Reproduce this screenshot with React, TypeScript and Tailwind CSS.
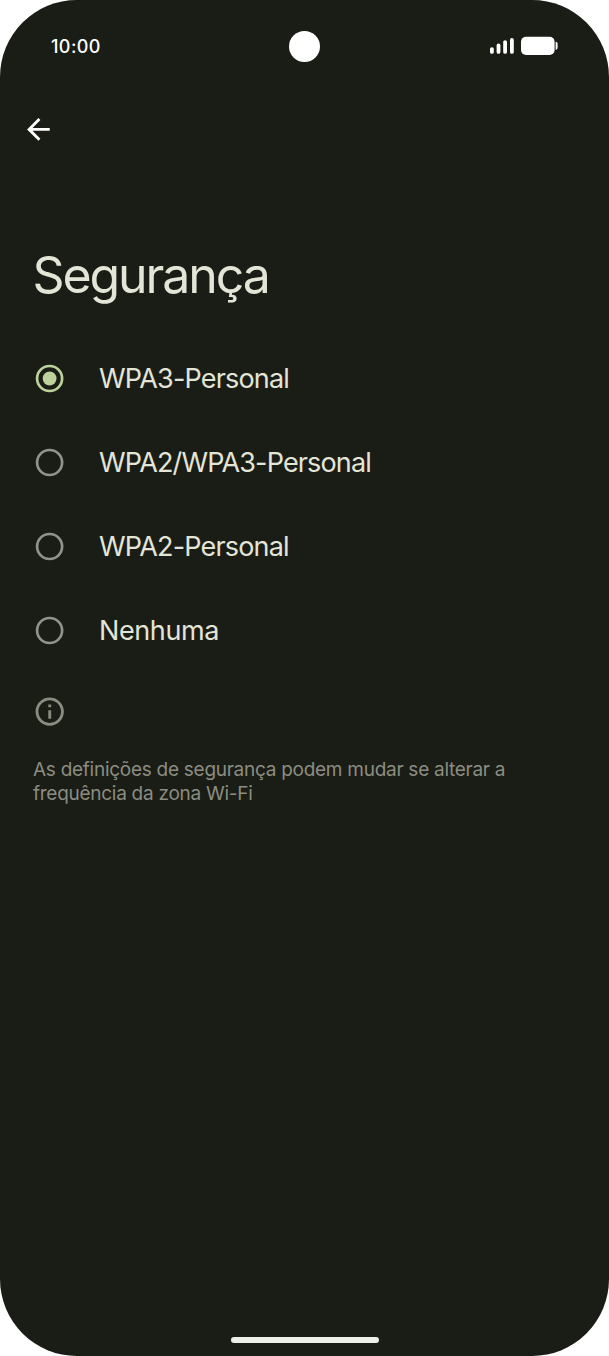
import { useState } from "react";
import clsx from "clsx";

type SecurityOption = {
  id: string;
  label: string;
  tracking: string;
};

const securityOptions: SecurityOption[] = [
  { id: "wpa3", label: "WPA3-Personal", tracking: "tracking-[-0.82px]" },
  { id: "wpa2-wpa3", label: "WPA2/WPA3-Personal", tracking: "tracking-[-0.86px]" },
  { id: "wpa2", label: "WPA2-Personal", tracking: "tracking-[-0.82px]" },
  { id: "none", label: "Nenhuma", tracking: "tracking-[-0.4px]" },
];

function StatusBar() {
  return (
    <header className="grid h-[92px] grid-cols-3 items-center pr-[51px] pl-[51px] text-white">
      <span className="pt-px text-[18px] leading-6 font-medium tracking-[0.4px]">
        10:00
      </span>
      <div className="ml-[68.5px] size-[31px] rounded-full bg-white" />
      <div className="flex items-center justify-end">
        <svg width="69" height="20" viewBox="0 0 69 20" fill="currentColor">
          <rect x="1" y="11.2" width="3.8" height="6.6" rx="1.9" />
          <rect x="7.6" y="7.6" width="3.8" height="10.2" rx="1.9" />
          <rect x="14.2" y="4.2" width="3.8" height="13.6" rx="1.9" />
          <rect x="21" y="2" width="3.8" height="15.8" rx="1.9" />
          <rect x="32" y="0.8" width="33.6" height="18.2" rx="5" />
          <path d="M66.6 5.8c1.5.3 2 1.2 2 2.2v3.6c0 1.2-.5 2-2 2.4z" />
        </svg>
      </div>
    </header>
  );
}

function BackButton() {
  return (
    <button
      type="button"
      aria-label="Voltar"
      className="ml-[20px] flex size-9 items-center justify-center text-white"
    >
      <svg width="34" height="34" viewBox="-0.3 -0.3 24 24" fill="currentColor">
        <path d="M20 11H7.83l5.59-5.59L12 4l-8 8 8 8 1.41-1.41L7.83 13H20v-2z" />
      </svg>
    </button>
  );
}

function Radio({ checked }: { checked: boolean }) {
  return (
    <svg
      width="34"
      height="34"
      viewBox="0 0 34 34"
      className={clsx("shrink-0", checked ? "text-[#bdd29a]" : "text-[#90948a]")}
    >
      <circle
        cx="16.6"
        cy="16.5"
        r="12.5"
        fill="none"
        stroke="currentColor"
        strokeWidth="2.7"
      />
      {checked && <circle cx="16.6" cy="16.5" r="6.9" fill="currentColor" />}
    </svg>
  );
}

export default function App() {
  const [selected, setSelected] = useState("wpa3");

  return (
    <div className="bg-white font-['Inter','Roboto',sans-serif]">
      <div className="flex h-[1356px] w-[609px] flex-col overflow-hidden rounded-[77px] bg-[#1a1c16]">
        <StatusBar />
        <div className="pt-[19px]">
          <BackButton />
        </div>

        <h1 className="mt-[98px] pl-[32.5px] text-[50px] leading-[60px] font-normal tracking-[-2.1px] text-[#e3e5d6]">
          Segurança
        </h1>

        <div role="radiogroup" className="mt-[32px] flex flex-col">
          {securityOptions.map((option) => (
            <button
              key={option.id}
              type="button"
              role="radio"
              aria-checked={selected === option.id}
              onClick={() => setSelected(option.id)}
              className="flex h-21 items-center gap-[32px] pl-[33px] text-left"
            >
              <Radio checked={selected === option.id} />
              <span
                className={clsx(
                  "text-[27px] leading-9 text-[#e3e5d6]",
                  option.tracking
                )}
              >
                {option.label}
              </span>
            </button>
          ))}
        </div>

        <div className="mt-[22px] pl-[33px] text-[#8b8d81]">
          <svg width="34" height="34" viewBox="0.2 0.3 24 24" fill="currentColor">
            <path d="M11 7h2v2h-2zm0 4h2v6h-2zm1-9C6.48 2 2 6.48 2 12s4.48 10 10 10 10-4.48 10-10S17.52 2 12 2zm0 18c-4.41 0-8-3.59-8-8s3.59-8 8-8 8 3.59 8 8-3.59 8-8 8z" />
          </svg>
          <p className="mt-[29px] text-[19px] leading-6 tracking-[-0.27px]">
            As definições de segurança podem mudar se alterar a
            <br />
            frequência da zona Wi-Fi
          </p>
        </div>

        <div className="mt-auto mb-[13px] ml-[231px] h-[6px] w-[148px] rounded-full bg-[#eceee8]" />
      </div>
    </div>
  );
}
